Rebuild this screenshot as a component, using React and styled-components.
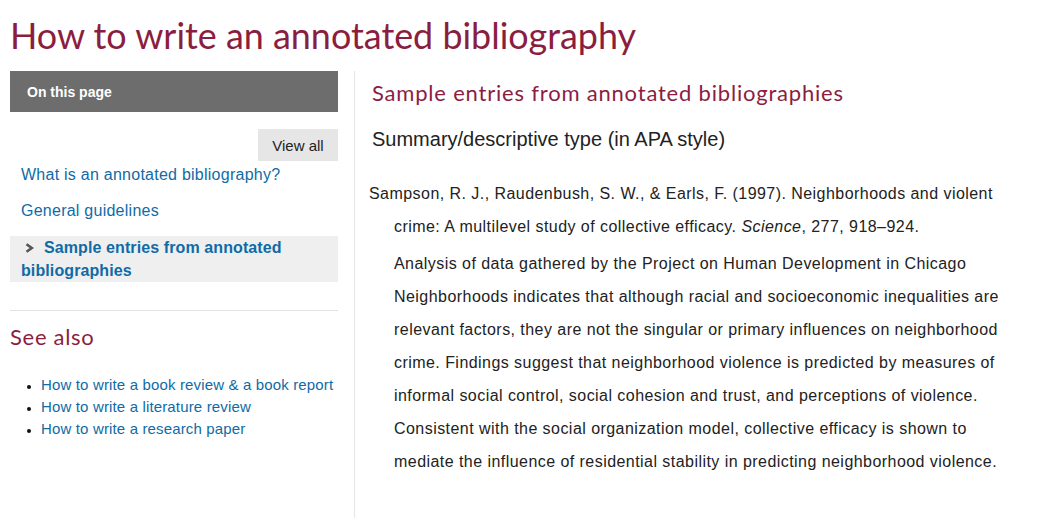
import styled, { createGlobalStyle } from "styled-components";

const GlobalStyle = createGlobalStyle`
  html, body {
    margin: 0;
    padding: 0;
    background: #fff;
  }
  body {
    font-family: "Liberation Sans", Arial, sans-serif;
    color: #222;
  }
`;

const maroon = "#8b1e3f";
const linkBlue = "#0f6ba6";

// 전체 페이지
const Page = styled.div`
  padding: 0 10px;
  min-height: 518px;
  box-sizing: border-box;
  display: flex;
  flex-direction: column;
`;

const Title = styled.h1`
  margin: 14px 0 0;
  height: 57px;
  font-family: "Lato", "Open Sans", sans-serif;
  font-weight: 400;
  font-size: 35.9px;
  line-height: 44px;
  color: ${maroon};
`;

const Layout = styled.div`
  flex: 1;
  display: grid;
  grid-template-columns: 344px 1fr;
`;

// 왼쪽 사이드바
const Sidebar = styled.aside`
  padding-right: 16px;
  display: flex;
  flex-direction: column;
`;

const SideHeader = styled.div`
  height: 41px;
  background: #6d6d6d;
  color: #fff;
  font-weight: 700;
  font-size: 14px;
  display: flex;
  align-items: center;
  padding-left: 17px;
`;

const ViewAllRow = styled.div`
  display: flex;
  justify-content: flex-end;
  margin-top: 17px;
`;

const ViewAllButton = styled.button`
  border: none;
  background: #e6e6e6;
  height: 32px;
  width: 80px;
  font-family: "Liberation Sans", Arial, sans-serif;
  font-size: 15px;
  color: #222;
  padding: 0;
`;

const NavList = styled.ul`
  list-style: none;
  margin: 0;
  padding: 0;
`;

const NavItem = styled.li`
  padding: ${(p) => (p.$active ? "0 11px" : "4px 11px 12px")};
  background: ${(p) => (p.$active ? "#efefef" : "transparent")};
  font-size: 16px;
  line-height: ${(p) => (p.$active ? "23px" : "20px")};
  font-weight: ${(p) => (p.$active ? 700 : 400)};
  letter-spacing: ${(p) => (p.$active ? "0.1px" : "0.25px")};
  color: ${linkBlue};
  margin-top: ${(p) => (p.$active ? "3px" : "0")};
`;

const Chevron = styled.svg`
  width: 9px;
  height: 10px;
  margin: 0 10px 0 4px;
  vertical-align: 0;
`;

const Rule = styled.hr`
  border: none;
  border-top: 1px solid #e3e3e3;
  margin: 28px 0 0;
`;

const SeeAlso = styled.h2`
  margin: 11px 0 0;
  font-family: "Lato", "Open Sans", sans-serif;
  font-weight: 400;
  font-size: 22px;
  line-height: 30px;
  letter-spacing: 0.7px;
  color: ${maroon};
`;

const BulletList = styled.ul`
  margin: 22px 0 0;
  padding-left: 31px;
  font-size: 15px;
  line-height: 22px;
  letter-spacing: 0.15px;
  color: ${linkBlue};

  li::marker {
    color: #111;
    font-size: 12px;
  }
`;

// 오른쪽 본문
const Main = styled.main`
  border-left: 1px solid #e6e6e6;
  padding-left: 14px;
`;

const SectionHeading = styled.h2`
  margin: 8px 0 0 3px;
  font-family: "Lato", "Open Sans", sans-serif;
  font-weight: 400;
  font-size: 22px;
  line-height: 28px;
  letter-spacing: 0.8px;
  color: ${maroon};
`;

const SubHeading = styled.h3`
  margin: 20px 0 0 3px;
  font-weight: 400;
  font-size: 20px;
  line-height: 24px;
  color: #222;
`;

const Citation = styled.p`
  margin: 26px 0 0;
  width: 606px;
  padding-left: 25px;
  text-indent: -25px;
  font-size: 16px;
  line-height: 33px;
  letter-spacing: 0.45px;
  color: #222;
`;

const Annotation = styled.p`
  margin: 4px 0 0;
  padding-left: 25px;
  width: 615px;
  font-size: 16px;
  line-height: 33px;
  letter-spacing: 0.45px;
  color: #222;
`;

export default function App() {
  return (
    <>
      <GlobalStyle />
      <Page>
        <Title>How to write an annotated bibliography</Title>
        <Layout>
          <Sidebar>
            <SideHeader>On this page</SideHeader>
            <ViewAllRow>
              <ViewAllButton>View all</ViewAllButton>
            </ViewAllRow>
            <NavList>
              <NavItem>What is an annotated bibliography?</NavItem>
              <NavItem>General guidelines</NavItem>
              <NavItem $active>
                <Chevron viewBox="0 0 9 10">
                  <path d="M1.5 1.2 L6.8 5 L1.5 8.8" fill="none" stroke="#555" strokeWidth="2.6" />
                </Chevron>
                Sample entries from annotated bibliographies
              </NavItem>
            </NavList>
            <Rule />
            <SeeAlso>See also</SeeAlso>
            <BulletList>
              <li>How to write a book review &amp; a book report</li>
              <li>How to write a literature review</li>
              <li>How to write a research paper</li>
            </BulletList>
          </Sidebar>
          <Main>
            <SectionHeading>Sample entries from annotated bibliographies</SectionHeading>
            <SubHeading>Summary/descriptive type (in APA style)</SubHeading>
            <Citation>
              Sampson, R. J., Raudenbush, S. W., &amp; Earls, F. (1997). Neighborhoods and violent
              crime: A multilevel study of collective efficacy. <i>Science</i>, 277, 918–924.
            </Citation>
            <Annotation>
              Analysis of data gathered by the Project on Human Development in Chicago
              Neighborhoods indicates that although racial and socioeconomic inequalities are
              relevant factors, they are not the singular or primary influences on neighborhood
              crime. Findings suggest that neighborhood violence is predicted by measures of
              informal social control, social cohesion and trust, and perceptions of violence.
              Consistent with the social organization model, collective efficacy is shown to
              mediate the influence of residential stability in predicting neighborhood violence.
            </Annotation>
          </Main>
        </Layout>
      </Page>
    </>
  );
}
